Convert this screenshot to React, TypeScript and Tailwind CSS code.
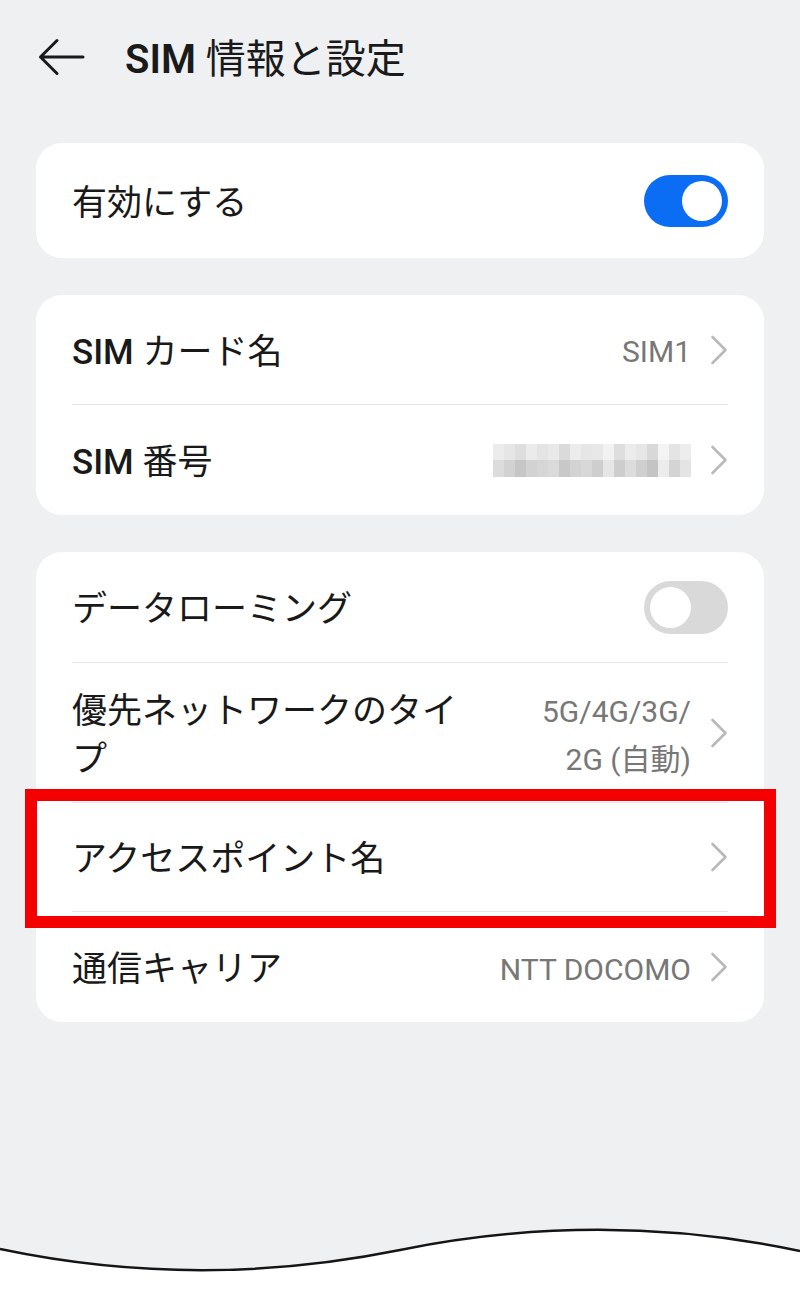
import React from "react";

const font = { fontFamily: "Roboto, 'Noto Sans CJK JP', 'Noto Sans', sans-serif" };

function Chevron() {
  return (
    <svg width="18" height="30" viewBox="0 0 18 30" className="shrink-0 ml-[19px]">
      <path d="M2.5 2 L15.5 15 L2.5 28" fill="none" stroke="#b9b9b9" strokeWidth="2.6" strokeLinecap="round" strokeLinejoin="round" />
    </svg>
  );
}

function Toggle({ on }: { on: boolean }) {
  return on ? (
    <div className="w-[84px] h-[52px] rounded-full bg-[#0b6cf4] flex items-center justify-end pr-[6px]">
      <div className="w-[40px] h-[40px] rounded-full bg-white" />
    </div>
  ) : (
    <div className="w-[84px] h-[53px] rounded-full bg-[#d9d9d9] flex items-center justify-start pl-[6px]">
      <div className="w-[41px] h-[41px] rounded-full bg-white" />
    </div>
  );
}

const mosaicTop = [
  "bg-[#ececec]", "bg-[#e6e6e6]", "bg-[#dedede]", "bg-[#ebebeb]", "bg-[#e4e4e4]", "bg-[#e9e9e9]",
  "bg-[#dadada]", "bg-[#ececec]", "bg-[#e6e6e6]", "bg-[#e8e8e8]", "bg-[#f2f2f2]", "bg-[#dedede]",
  "bg-[#ececec]", "bg-[#e6e6e6]", "bg-[#d8d8d8]", "bg-[#f4f4f4]", "bg-[#e4e4e4]", "bg-[#ededed]",
];
const mosaicBottom = [
  "bg-[#dcdcdc]", "bg-[#d2d2d2]", "bg-[#c6c6c6]", "bg-[#d2d2d2]", "bg-[#d6d6d6]", "bg-[#dadada]",
  "bg-[#c8c8c8]", "bg-[#d3d3d3]", "bg-[#d8d8d8]", "bg-[#cecece]", "bg-[#e6e6e6]", "bg-[#cdcdcd]",
  "bg-[#dcdcdc]", "bg-[#cfcfcf]", "bg-[#c4c4c4]", "bg-[#ececec]", "bg-[#d4d4d4]", "bg-[#e4e4e4]",
];

function Mosaic() {
  return (
    <div className="flex flex-col w-[198px] h-[33px]">
      <div className="flex flex-1">
        {mosaicTop.map((c, i) => (
          <div key={i} className={`flex-1 ${c}`} />
        ))}
      </div>
      <div className="flex flex-1">
        {mosaicBottom.map((c, i) => (
          <div key={i} className={`flex-1 ${c}`} />
        ))}
      </div>
    </div>
  );
}

function Row({
  label,
  right,
  border = true,
  h = "h-[110px]",
}: {
  label: React.ReactNode;
  right: React.ReactNode;
  border?: boolean;
  h?: string;
}) {
  return (
    <div className={`flex items-center justify-between ${h} ${border ? "border-b border-[#e6e6e6]" : ""}`}>
      <div className="text-[35px] leading-[48px] text-[#191919] pt-[6px]">{label}</div>
      <div className="flex items-center">{right}</div>
    </div>
  );
}

function Value({ children }: { children: React.ReactNode }) {
  return <span className="text-[30px] text-[#777777] leading-[48px] pt-[5px]">{children}</span>;
}

export default function App() {
  return (
    <div className="w-[800px] h-[1300px] bg-[#eff0f2] flex flex-col relative overflow-hidden" style={font}>
      <div className="h-[116px] flex items-center shrink-0">
        <svg width="48" height="40" viewBox="0 0 48 40" className="ml-[38px]">
          <path d="M19 2.5 L2.5 19 L19 35.5 M2.5 19 L45 19" fill="none" stroke="#1a1a1a" strokeWidth="3" strokeLinecap="round" strokeLinejoin="round" />
        </svg>
        <div className="ml-[39px] text-[40px] text-[#1a1a1a] leading-none pt-[3px]">
          <span className="font-semibold">SIM</span> 情報と設定
        </div>
      </div>

      <div className="mt-[27px] mx-[36px] flex flex-col gap-[37px]">
        <div className="bg-white rounded-[26px] px-[36px]">
          <Row label="有効にする" right={<Toggle on />} border={false} h="h-[115px]" />
        </div>

        <div className="bg-white rounded-[26px] px-[36px]">
          <Row
            label={<><span className="font-medium">SIM</span> カード名</>}
            right={<><Value>SIM1</Value><Chevron /></>}
          />
          <Row
            label={<><span className="font-medium">SIM</span> 番号</>}
            right={<><Mosaic /><Chevron /></>}
            border={false}
          />
        </div>

        <div className="bg-white rounded-[26px] px-[36px]">
          <Row label="データローミング" right={<Toggle on={false} />} h="h-[111px]" />
          <div className="flex items-center justify-between h-[140px] border-b border-[#e6e6e6]">
            <div className="text-[35px] leading-[48px] text-[#191919] max-w-[395px] pt-[6px]">優先ネットワークのタイプ</div>
            <div className="flex items-center">
              <div className="text-right text-[30px] text-[#777777] leading-[48px] pt-[6px]">
                5G/4G/3G/
                <br />
                2G (自動)
              </div>
              <Chevron />
            </div>
          </div>
          <Row label="アクセスポイント名" right={<Chevron />} h="h-[109px]" />
          <Row label="通信キャリア" right={<><Value>NTT DOCOMO</Value><Chevron /></>} border={false} />
        </div>
      </div>

      <div className="absolute left-[25px] top-[789px] w-[751px] h-[139px] border-[12px] border-[#f50000]" />

      <div className="flex-1" />
      <svg width="800" height="100" viewBox="0 0 800 100" className="block shrink-0">
        <path d="M0 49 C133 77, 267 77, 400 50 C533 23, 667 23, 800 51 L800 100 L0 100 Z" fill="#ffffff" />
        <path d="M0 49 C133 77, 267 77, 400 50 C533 23, 667 23, 800 51" fill="none" stroke="#151515" strokeWidth="2.5" />
      </svg>
    </div>
  );
}
